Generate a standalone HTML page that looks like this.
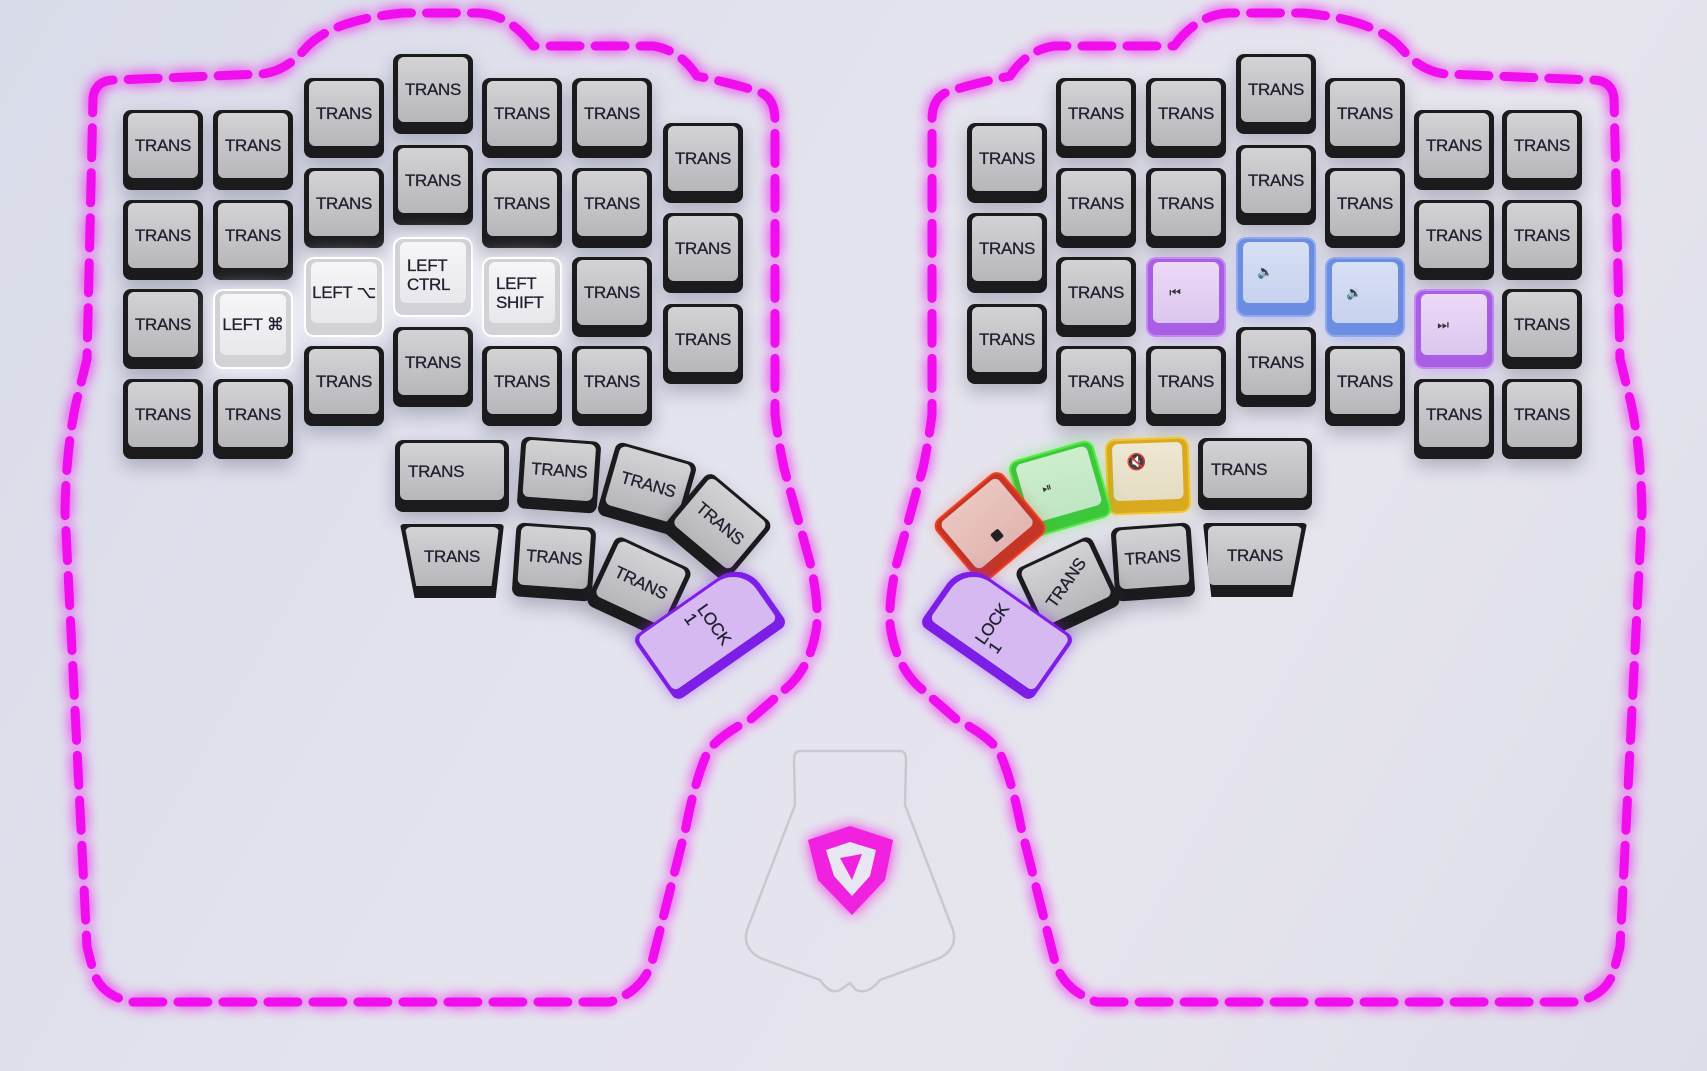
<!DOCTYPE html>
<html><head><meta charset="utf-8"><style>
html,body{margin:0;padding:0}
body{width:1707px;height:1071px;overflow:hidden;position:relative;background:linear-gradient(120deg,#d8dbe9 0%,#e4e4ee 45%,#e6e5ee 70%,#dcdde8 100%);font-family:"Liberation Sans","DejaVu Sans",sans-serif}
svg.bg{position:absolute;left:0;top:0}
.k{position:absolute;width:80px;height:80px;background:#1b1b1d;border-radius:8px;box-shadow:0 8px 18px rgba(40,40,70,.28)}
.k .f{position:absolute;left:5px;right:5px;top:3px;bottom:12px;border-radius:6px;background:linear-gradient(#d3d3d6,#b7b7bb);display:flex;align-items:center;justify-content:center;font-size:17px;color:#1f2030;letter-spacing:-.3px;line-height:19px;white-space:nowrap;-webkit-text-stroke:.3px #1f2030}
.k.l{background:#d2d2d6;box-shadow:0 0 0 2px #fff,0 0 22px rgba(255,255,255,.9)}
.k.l .f{background:linear-gradient(#f6f6f8,#e8e8ec);justify-content:flex-start;padding-left:7px}
.k.p{background:#a85fe6;box-shadow:0 0 0 2px #c58af0,0 6px 16px rgba(150,80,220,.35)}
.k.p .f{background:linear-gradient(#ecdaf7,#dcc6ef)}
.k.b{background:#6b8de2;box-shadow:0 0 0 2px #8fa8ee,0 6px 16px rgba(80,110,220,.35)}
.k.b .f{background:linear-gradient(#d8e0f5,#c7d2ee)}
.k .ic{font-size:13px;color:#333;margin-right:22px;-webkit-text-stroke:0}
</style></head><body>
<svg class="bg" width="1707" height="1071">
<defs><filter id="gl" x="-20%" y="-20%" width="140%" height="140%"><feGaussianBlur stdDeviation="7" result="b"/><feMerge><feMergeNode in="b"/><feMergeNode in="SourceGraphic"/></feMerge></filter></defs>
<g id="ol" filter="url(#gl)" fill="none" stroke="#f010ee" stroke-width="9" stroke-linecap="round" stroke-linejoin="round" stroke-dasharray="30 15">
<path d="M93,98 Q95,80 115,80 L261,74 Q285,72 305,49 Q330,20 403,13 L479,13 Q510,15 533,46 L653,46 Q680,50 697,76 Q740,85 762,93 Q775,100 775,120 L775,414 Q778,440 784,468 L811,566 Q820,610 816,631 Q810,665 790,685 L751,719 Q720,735 708,751 Q695,780 686,827 L653,958 Q645,990 610,1002 L131,1002 Q100,995 93,970 L87,947 L65,512 Q66,450 76,403 L87,359 Z"/>
</g>
<use href="#ol" transform="matrix(-1 0 0 1 1707 0)"/>
<path d="M800,751 L900,751 Q906,751 906,760 L905,805 L953,930 Q958,948 940,958 L880,980 Q868,995 856,990 L850,983 L840,990 Q830,995 820,980 L760,958 Q742,948 747,930 L795,805 L794,760 Q794,751 800,751 Z" fill="none" stroke="#c8c8d0" stroke-width="2.5"/>
<g filter="url(#gl)">
<path d="M808,840 L850,826 L893,840 L885,880 L852,915 L818,880 Z" fill="#f020e0"/>
<path d="M826,850 L850,842 L876,850 L870,876 L852,896 L834,876 Z" fill="#e8e6f0"/>
<path d="M840,858 L862,854 L852,880 Z" fill="#f020e0"/>
</g>
</svg>

<!-- left main -->
<div class="k" style="left:123px;top:110px"><div class="f">TRANS</div></div>
<div class="k" style="left:123px;top:200px"><div class="f">TRANS</div></div>
<div class="k" style="left:123px;top:289px"><div class="f">TRANS</div></div>
<div class="k" style="left:123px;top:379px"><div class="f">TRANS</div></div>
<div class="k" style="left:213px;top:110px"><div class="f">TRANS</div></div>
<div class="k" style="left:213px;top:200px"><div class="f">TRANS</div></div>
<div class="k l" style="left:215px;top:291px;width:76px;height:76px"><div class="f" style="justify-content:center;padding-left:0">LEFT ⌘</div></div>
<div class="k" style="left:213px;top:379px"><div class="f">TRANS</div></div>
<div class="k" style="left:304px;top:78px"><div class="f">TRANS</div></div>
<div class="k" style="left:304px;top:168px"><div class="f">TRANS</div></div>
<div class="k l" style="left:306px;top:259px;width:76px;height:76px"><div class="f" style="justify-content:center;padding-left:0">LEFT ⌥</div></div>
<div class="k" style="left:304px;top:346px"><div class="f">TRANS</div></div>
<div class="k" style="left:393px;top:54px"><div class="f">TRANS</div></div>
<div class="k" style="left:393px;top:145px"><div class="f">TRANS</div></div>
<div class="k l" style="left:395px;top:239px;width:76px;height:76px"><div class="f" style="align-items:flex-start;padding-top:14px">LEFT<br>CTRL</div></div>
<div class="k" style="left:393px;top:327px"><div class="f">TRANS</div></div>
<div class="k" style="left:482px;top:78px"><div class="f">TRANS</div></div>
<div class="k" style="left:482px;top:168px"><div class="f">TRANS</div></div>
<div class="k l" style="left:484px;top:259px;width:76px;height:76px"><div class="f">LEFT<br>SHIFT</div></div>
<div class="k" style="left:482px;top:346px"><div class="f">TRANS</div></div>
<div class="k" style="left:572px;top:78px"><div class="f">TRANS</div></div>
<div class="k" style="left:572px;top:168px"><div class="f">TRANS</div></div>
<div class="k" style="left:572px;top:257px"><div class="f">TRANS</div></div>
<div class="k" style="left:572px;top:346px"><div class="f">TRANS</div></div>
<div class="k" style="left:663px;top:123px"><div class="f">TRANS</div></div>
<div class="k" style="left:663px;top:213px"><div class="f">TRANS</div></div>
<div class="k" style="left:663px;top:304px"><div class="f">TRANS</div></div>

<!-- right main -->
<div class="k" style="left:967px;top:123px"><div class="f">TRANS</div></div>
<div class="k" style="left:967px;top:213px"><div class="f">TRANS</div></div>
<div class="k" style="left:967px;top:304px"><div class="f">TRANS</div></div>
<div class="k" style="left:1056px;top:78px"><div class="f">TRANS</div></div>
<div class="k" style="left:1056px;top:168px"><div class="f">TRANS</div></div>
<div class="k" style="left:1056px;top:257px"><div class="f">TRANS</div></div>
<div class="k" style="left:1056px;top:346px"><div class="f">TRANS</div></div>
<div class="k" style="left:1146px;top:78px"><div class="f">TRANS</div></div>
<div class="k" style="left:1146px;top:168px"><div class="f">TRANS</div></div>
<div class="k p" style="left:1148px;top:259px;width:76px;height:76px"><div class="f"><span class="ic">⏮</span></div></div>
<div class="k" style="left:1146px;top:346px"><div class="f">TRANS</div></div>
<div class="k" style="left:1236px;top:54px"><div class="f">TRANS</div></div>
<div class="k" style="left:1236px;top:145px"><div class="f">TRANS</div></div>
<div class="k b" style="left:1238px;top:239px;width:76px;height:76px"><div class="f" style="align-items:flex-start;padding-top:20px"><span class="ic">🔈</span></div></div>
<div class="k" style="left:1236px;top:327px"><div class="f">TRANS</div></div>
<div class="k" style="left:1325px;top:78px"><div class="f">TRANS</div></div>
<div class="k" style="left:1325px;top:168px"><div class="f">TRANS</div></div>
<div class="k b" style="left:1327px;top:259px;width:76px;height:76px"><div class="f"><span class="ic">🔉</span></div></div>
<div class="k" style="left:1325px;top:346px"><div class="f">TRANS</div></div>
<div class="k" style="left:1414px;top:110px"><div class="f">TRANS</div></div>
<div class="k" style="left:1414px;top:200px"><div class="f">TRANS</div></div>
<div class="k p" style="left:1416px;top:291px;width:76px;height:76px"><div class="f"><span class="ic">⏭</span></div></div>
<div class="k" style="left:1414px;top:379px"><div class="f">TRANS</div></div>
<div class="k" style="left:1502px;top:110px"><div class="f">TRANS</div></div>
<div class="k" style="left:1502px;top:200px"><div class="f">TRANS</div></div>
<div class="k" style="left:1502px;top:289px"><div class="f">TRANS</div></div>
<div class="k" style="left:1502px;top:379px"><div class="f">TRANS</div></div>

<!-- left thumb -->
<div class="k" style="left:395px;top:440px;width:114px;height:72px"><div class="f" style="justify-content:flex-start;padding-left:8px">TRANS</div></div>
<div class="k" style="left:519px;top:439px;height:72px;transform:rotate(4deg)"><div class="f">TRANS</div></div>
<div class="k" style="left:605px;top:451px;width:84px;height:76px;transform:rotate(16deg)"><div class="f">TRANS</div></div>
<div class="k" style="left:675px;top:489px;width:84px;height:76px;transform:rotate(40deg)"><div class="f">TRANS</div></div>
<div class="k" style="left:400px;top:524px;width:104px;height:74px;clip-path:polygon(0 0,100% 0,92% 100%,14% 100%);border-radius:4px"><div class="f" style="clip-path:polygon(0 0,100% 0,92% 100%,12% 100%)">TRANS</div></div>
<div class="k" style="left:514px;top:525px;height:74px;transform:rotate(4deg)"><div class="f">TRANS</div></div>
<div class="k" style="left:597px;top:549px;width:84px;height:76px;transform:rotate(25deg)"><div class="f">TRANS</div></div>
<div class="k p" style="left:642px;top:592px;width:136px;height:78px;transform:rotate(-35deg);background:#7d1ee6;box-shadow:0 0 14px rgba(150,40,240,.5);border-radius:8px 30px 8px 8px"><div class="f" style="background:#d6b9f1;border-radius:6px 28px 6px 6px;bottom:10px;left:4px;right:6px"><span style="transform:rotate(90deg);display:inline-block;line-height:16px">LOCK<br>1</span></div></div>

<!-- right thumb -->
<div class="k" style="left:1198px;top:438px;width:114px;height:72px"><div class="f" style="justify-content:flex-start;padding-left:8px">TRANS</div></div>
<div class="k" style="left:1108px;top:440px;height:72px;transform:rotate(-2deg);background:#d9a91f;box-shadow:0 0 0 2px #f1c630,0 0 14px rgba(240,200,40,.4)"><div class="f" style="background:linear-gradient(#eee7d2,#e5dcc3);justify-content:flex-start;padding:0 0 18px 14px"><span style="font-size:16px;color:#444;-webkit-text-stroke:0">🔇</span></div></div>
<div class="k" style="left:1018px;top:451px;width:84px;height:76px;transform:rotate(-16deg);background:#3cc73c;box-shadow:0 0 0 2px #56ec44,0 0 16px rgba(60,230,60,.5)"><div class="f" style="background:linear-gradient(#cdeecd,#bfe6c4);justify-content:flex-start;padding-left:20px"><span style="font-size:12px;color:#333;-webkit-text-stroke:0">⏯</span></div></div>
<div class="k" style="left:948px;top:489px;width:84px;height:76px;transform:rotate(-40deg);background:#c43526;box-shadow:0 0 0 2px #f04020,0 0 14px rgba(240,60,40,.4)"><div class="f" style="background:linear-gradient(#eac6c0,#e2b6b2);align-items:flex-end;padding-bottom:10px"><span style="display:inline-block;width:10px;height:10px;background:#222;border-radius:2px"></span></div></div>
<div class="k" style="left:1203px;top:523px;width:104px;height:74px;clip-path:polygon(0 0,100% 0,86% 100%,8% 100%);border-radius:4px"><div class="f" style="clip-path:polygon(0 0,100% 0,88% 100%,0 100%)">TRANS</div></div>
<div class="k" style="left:1113px;top:525px;height:74px;transform:rotate(-4deg)"><div class="f">TRANS</div></div>
<div class="k" style="left:1026px;top:549px;width:84px;height:76px;transform:rotate(-25deg)"><div class="f"><span style="display:inline-block;transform:rotate(-30deg)">TRANS</span></div></div>
<div class="k p" style="left:929px;top:592px;width:136px;height:78px;transform:rotate(35deg);background:#7d1ee6;box-shadow:0 0 14px rgba(150,40,240,.5);border-radius:30px 8px 8px 8px"><div class="f" style="background:#d6b9f1;border-radius:28px 6px 6px 6px;bottom:10px;left:6px;right:4px"><span style="transform:rotate(-90deg);display:inline-block;line-height:16px">LOCK<br>1</span></div></div>
</body></html>
